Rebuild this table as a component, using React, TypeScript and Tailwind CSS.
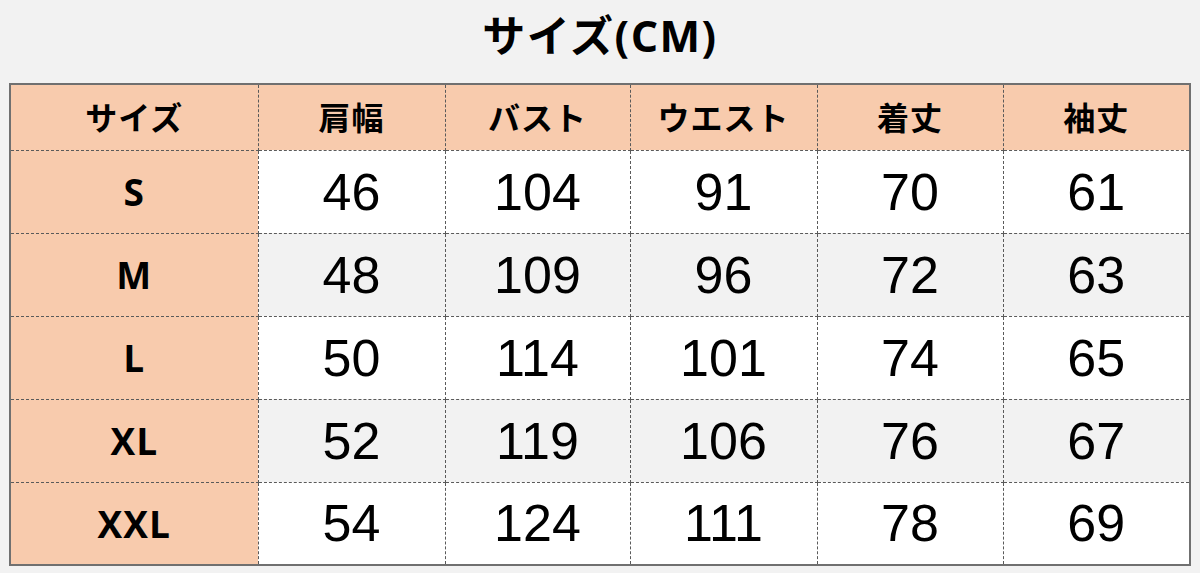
const headers = ['サイズ', '肩幅', 'バスト', 'ウエスト', '着丈', '袖丈']

const rows: [string, number[]][] = [
  ['S', [46, 104, 91, 70, 61]],
  ['M', [48, 109, 96, 72, 63]],
  ['L', [50, 114, 101, 74, 65]],
  ['XL', [52, 119, 106, 76, 67]],
  ['XXL', [54, 124, 111, 78, 69]],
]

const jp = { fontFamily: '"Open Sans", "Noto Sans CJK JP", sans-serif' }
const num = { fontFamily: '"Liberation Sans", Arial, sans-serif' }

export default function App() {
  return (
    <div className="w-[1200px] h-[573px] bg-[#f2f2f2] flex flex-col items-center overflow-hidden">
      <h1 className="h-[83px] flex items-center pb-[12px] text-[43px] font-bold text-black leading-none tracking-[1.5px]" style={jp}>
        サイズ(CM)
      </h1>
      <table className="w-[1182px] border-collapse border-2 border-[#707070] table-fixed">
        <colgroup>
          <col className="w-[248px]" />
          <col className="w-[187px]" />
          <col className="w-[185px]" />
          <col className="w-[187px]" />
          <col className="w-[186px]" />
          <col />
        </colgroup>
        <thead>
          <tr className="h-[66px] bg-[#f8cbad]">
            {headers.map((h) => (
              <th
                key={h}
                className="border border-dashed border-[#5a5a5a] text-[32px] font-bold text-black text-center pt-[2px] tracking-[1px]"
                style={jp}
              >
                {h}
              </th>
            ))}
          </tr>
        </thead>
        <tbody>
          {rows.map(([size, vals], i) => (
            <tr key={size} className={i % 2 === 1 ? 'h-[83px] bg-[#f2f2f2]' : 'h-[83px] bg-white'}>
              <td
                className="border border-dashed border-[#5a5a5a] bg-[#f8cbad] text-[37px] font-bold text-black text-center tracking-[1px]"
                style={jp}
              >
                {size}
              </td>
              {vals.map((v, j) => (
                <td
                  key={j}
                  className="border border-dashed border-[#5a5a5a] text-[52px] text-black text-center leading-none"
                  style={num}
                >
                  {v}
                </td>
              ))}
            </tr>
          ))}
        </tbody>
      </table>
    </div>
  )
}
